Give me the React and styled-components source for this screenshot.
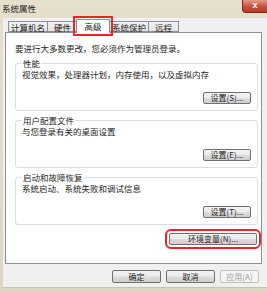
import React from 'react';
import styled, { createGlobalStyle } from 'styled-components';

const GlobalStyle = createGlobalStyle`
  html, body {
    margin: 0;
    padding: 0;
    background: #dcd5c1;
  }
  body {
    font-family: "Noto Sans CJK SC", "Liberation Sans", sans-serif;
    font-size: 8.5px;
    color: #1e1e1e;
  }
`;

const Window = styled.div`
  width: 267px;
  height: 292px;
  display: flex;
  flex-direction: column;
  background: linear-gradient(180deg, #e6dfcc 0%, #ddd6c2 100%);
  overflow: hidden;
`;

const TitleBar = styled.div`
  height: 18px;
  flex: none;
  display: flex;
  justify-content: space-between;
  align-items: flex-start;
  padding-left: 2px;

  .title {
    line-height: 16px;
    color: #222;
  }
`;

const CloseButton = styled.div`
  width: 24px;
  height: 12px;
  border-radius: 0 0 0 4px;
  background: linear-gradient(180deg, #e49a85 0%, #c8503a 55%, #b83a26 100%);
  border: 1px solid #7a2a1c;
  border-top: none;
  border-right: none;
  color: #fff;
  font-family: "Liberation Sans", sans-serif;
  font-size: 9px;
  font-weight: bold;
  line-height: 11px;
  text-align: center;
`;

const Body = styled.div`
  flex: 1;
  min-height: 0;
  margin: 0 0 5px 3px;
  background: #f0f0f0;
  padding: 3px 5px 4px 2px;
  display: flex;
  flex-direction: column;
  box-shadow: 0 1px 0 #c8c2b0;
`;

const TabStrip = styled.div`
  display: flex;
  align-items: flex-end;
  height: 11px;
  flex: none;
  padding-left: 3px;
  position: relative;
  z-index: 1;
`;

const Tab = styled.div`
  min-width: ${({ active }) => (active ? '34px' : '31px')};
  height: ${({ active }) => (active ? '14px' : '11px')};
  margin: ${({ active }) => (active ? '0 -1px -1px -1px' : '0 -1px 0 0')};
  padding: 0 2px;
  border: 1px solid #8e8f8f;
  border-bottom: ${({ active }) => (active ? 'none' : '1px solid #8e8f8f')};
  background: ${({ active }) =>
    active ? '#ffffff' : 'linear-gradient(180deg, #f2f2f2 0%, #e3e3e3 100%)'};
  line-height: ${({ active }) => (active ? '13px' : '10px')};
  box-sizing: border-box;
  text-align: center;
  white-space: nowrap;
  outline: ${({ active }) => (active ? '2px solid #e8262a' : 'none')};
  outline-offset: 1px;
  position: relative;
  z-index: ${({ active }) => (active ? 2 : 0)};
`;

const Panel = styled.div`
  flex: 1;
  min-height: 0;
  margin-bottom: 6px;
  background: #fff;
  border: 1px solid #8e8f8f;
  padding: 10px 3px 0 9px;
  display: flex;
  flex-direction: column;
`;

const Intro = styled.div`
  line-height: 11px;
  margin-bottom: 4px;
`;

const Group = styled.fieldset`
  margin: 0 0 4px 0;
  padding: 0 6px 6px 6px;
  border: 1px solid #d5dfe5;
  border-radius: 3px;
  min-width: 0;

  legend {
    padding: 0 1px;
    line-height: 11px;
  }
`;

const GroupText = styled.div`
  line-height: 11px;
`;

const ButtonRow = styled.div`
  display: flex;
  flex: none;
  justify-content: flex-end;
  margin-top: ${({ gap }) => (gap === undefined ? 12 : gap)}px;
  padding-right: ${({ right }) => right || 0}px;
  gap: ${({ spacing }) => spacing || 0}px;
`;

const Button = styled.div`
  width: ${({ width }) => width || 48}px;
  height: 12px;
  box-sizing: border-box;
  border: 1px solid ${({ disabled }) => (disabled ? '#bfbfbf' : '#707070')};
  border-radius: 2px;
  background: ${({ disabled }) =>
    disabled
      ? '#f4f4f4'
      : 'linear-gradient(180deg, #f3f3f3 0%, #ebebeb 48%, #dddddd 52%, #cfcfcf 100%)'};
  color: ${({ disabled }) => (disabled ? '#9d9d9d' : '#1e1e1e')};
  font-size: 8px;
  line-height: 10px;
  text-align: center;
  white-space: nowrap;
  outline: ${({ marked }) => (marked ? '2px solid #e8262a' : 'none')};
  outline-offset: ${({ marked }) => (marked ? '2px' : '0')};
`;

const DialogButtons = styled(ButtonRow)`
  padding-right: 3px;

  ${Button} {
    height: 13px;
    line-height: 11px;
  }
`;

const groups = [
  { title: '性能', text: '视觉效果，处理器计划，内存使用，以及虚拟内存', button: '设置(S)...' },
  { title: '用户配置文件', text: '与您登录有关的桌面设置', button: '设置(E)...' },
  { title: '启动和故障恢复', text: '系统启动、系统失败和调试信息', button: '设置(T)...' },
];

const tabs = ['计算机名', '硬件', '高级', '系统保护', '远程'];

const App = () => (
  <>
    <GlobalStyle />
    <Window>
      <TitleBar>
        <span className="title">系统属性</span>
        <CloseButton>x</CloseButton>
      </TitleBar>
      <Body>
        <TabStrip>
          {tabs.map((t) => (
            <Tab key={t} active={t === '高级'}>
              {t}
            </Tab>
          ))}
        </TabStrip>
        <Panel>
          <Intro>要进行大多数更改，您必须作为管理员登录。</Intro>
          {groups.map((g) => (
            <Group key={g.title}>
              <legend>{g.title}</legend>
              <GroupText>{g.text}</GroupText>
              <ButtonRow>
                <Button>{g.button}</Button>
              </ButtonRow>
            </Group>
          ))}
          <ButtonRow gap={4} right={1}>
            <Button width={88} marked>
              环境变量(N)...
            </Button>
          </ButtonRow>
        </Panel>
        <DialogButtons gap={0} spacing={5}>
          <Button width={49}>确定</Button>
          <Button width={49}>取消</Button>
          <Button width={39} disabled>
            应用(A)
          </Button>
        </DialogButtons>
      </Body>
    </Window>
  </>
);

export default App;
